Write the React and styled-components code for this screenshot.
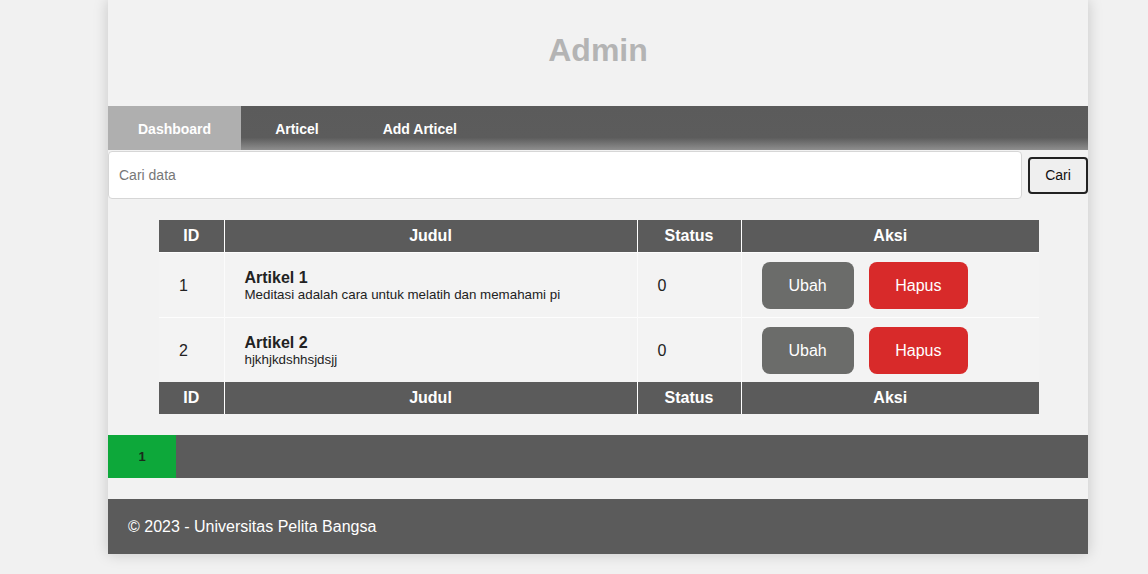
import React from 'react';
import styled, { createGlobalStyle } from 'styled-components';

const GlobalStyle = createGlobalStyle`
    * {
        box-sizing: border-box;
    }

    body {
        margin: 0;
        background-color: #f1f1f1;
        font-family: "Liberation Sans", Arial, sans-serif;
    }
`;

const Wrapper = styled.div`
    width: 980px;
    margin: 0 0 20px 108px;
    background-color: #f2f2f2;
    box-shadow: 0 0 14px rgba(0, 0, 0, 0.18);
`;

const Header = styled.header`
    height: 106px;
    display: flex;
    align-items: center;
    justify-content: center;
`;

const Title = styled.h1`
    margin: 0 0 6px;
    font-size: 32px;
    font-weight: 700;
    color: #b4b4b4;
`;

const Nav = styled.nav`
    height: 44px;
    display: flex;
    gap: 4px;
    background: linear-gradient(to bottom, #5b5b5b 0%, #5c5c5c 72%, #8e8e8e 100%);
`;

const NavLink = styled.a`
    display: flex;
    align-items: center;
    padding: 2px 30px 0;
    font-size: 14px;
    font-weight: 700;
    color: #fff;
    text-decoration: none;
    background-color: ${props => props.active ? '#afafaf' : 'transparent'};
`;

const SearchForm = styled.form`
    display: flex;
    align-items: center;
    gap: 6px;
    padding-top: 1px;
`;

const SearchInput = styled.input`
    flex: 1;
    height: 48px;
    padding: 0 10px;
    border: 1px solid #d6d6d6;
    border-radius: 4px;
    background-color: #fff;
    font-family: inherit;
    font-size: 14px;

    &::placeholder {
        color: #777;
    }
`;

const SearchButton = styled.button`
    width: 60px;
    height: 37px;
    border: 2px solid #222;
    border-radius: 4px;
    background-color: #efefef;
    font-family: inherit;
    font-size: 14px;
    color: #111;
`;

const Table = styled.table`
    width: 880px;
    margin: 21px 0 0 51px;
    border-collapse: collapse;
`;

const HeadCell = styled.th`
    height: 32px;
    padding: 0;
    background-color: #5b5b5b;
    border: 1px solid #fff;
    border-top: none;
    border-bottom: none;
    color: #fff;
    font-size: 16px;
    font-weight: 700;
    width: ${props => props.w};

    &:first-child {
        border-left: none;
    }

    &:last-child {
        border-right: none;
    }
`;

const Row = styled.tr`
    height: 65px;
    background-color: #f3f3f3;
    border-top: 1px solid #fdfdfd;
`;

const Cell = styled.td`
    padding: 2px 20px 0;
    border-left: 1px solid #fbfbfb;
    font-size: 16px;
    color: #222;

    &:first-child {
        border-left: none;
    }
`;

const ArticleTitle = styled.div`
    font-size: 16px;
    font-weight: 700;
    color: #222;
`;

const ArticleDesc = styled.div`
    font-size: 13.33px;
    color: #222;
`;

const Actions = styled.div`
    display: flex;
    gap: 15px;
`;

const ActionButton = styled.button`
    height: 47px;
    padding: 0 ${props => props.danger ? '26.5px' : '27px'};
    border: none;
    border-radius: 8px;
    background-color: ${props => props.danger ? '#d82a2a' : '#6b6c6a'};
    font-family: inherit;
    font-size: 16px;
    color: #fff;
`;

const Pagination = styled.div`
    height: 43px;
    margin-top: 21px;
    display: flex;
    background-color: #5b5b5b;
`;

const PageItem = styled.a`
    width: 68px;
    display: flex;
    align-items: center;
    justify-content: center;
    background-color: #0da83a;
    font-size: 13px;
    font-weight: 700;
    color: #1a2a1a;
    text-decoration: none;
`;

const Footer = styled.footer`
    height: 55px;
    margin-top: 21px;
    padding: 0 20px;
    display: flex;
    align-items: center;
    background-color: #5b5b5b;
    color: #fff;
    font-size: 16px;
`;

const articles = [
    { id: 1, judul: 'Artikel 1', isi: 'Meditasi adalah cara untuk melatih dan memahami pi', status: 0 },
    { id: 2, judul: 'Artikel 2', isi: 'hjkhjkdshhsjdsjj', status: 0 },
];

const HeadRow = () => (
    <tr>
        <HeadCell w='65px'>ID</HeadCell>
        <HeadCell w='413px'>Judul</HeadCell>
        <HeadCell w='104px'>Status</HeadCell>
        <HeadCell>Aksi</HeadCell>
    </tr>
);

const App = () => {
    return (
        <>
            <GlobalStyle />
            <Wrapper>
                <Header>
                    <Title>Admin</Title>
                </Header>
                <Nav>
                    <NavLink href='#' active>Dashboard</NavLink>
                    <NavLink href='#'>Articel</NavLink>
                    <NavLink href='#'>Add Articel</NavLink>
                </Nav>
                <SearchForm onSubmit={e => e.preventDefault()}>
                    <SearchInput type='text' placeholder='Cari data' />
                    <SearchButton type='submit'>Cari</SearchButton>
                </SearchForm>

                <Table>
                    <thead>
                        <HeadRow />
                    </thead>
                    <tbody>
                        {articles.map(a => (
                            <Row key={a.id}>
                                <Cell>{a.id}</Cell>
                                <Cell>
                                    <ArticleTitle>{a.judul}</ArticleTitle>
                                    <ArticleDesc>{a.isi}</ArticleDesc>
                                </Cell>
                                <Cell>{a.status}</Cell>
                                <Cell>
                                    <Actions>
                                        <ActionButton>Ubah</ActionButton>
                                        <ActionButton danger>Hapus</ActionButton>
                                    </Actions>
                                </Cell>
                            </Row>
                        ))}
                    </tbody>
                    <tfoot>
                        <HeadRow />
                    </tfoot>
                </Table>

                <Pagination>
                    <PageItem href='#'>1</PageItem>
                </Pagination>

                <Footer>© 2023 - Universitas Pelita Bangsa</Footer>
            </Wrapper>
        </>
    );
};

export default App;
